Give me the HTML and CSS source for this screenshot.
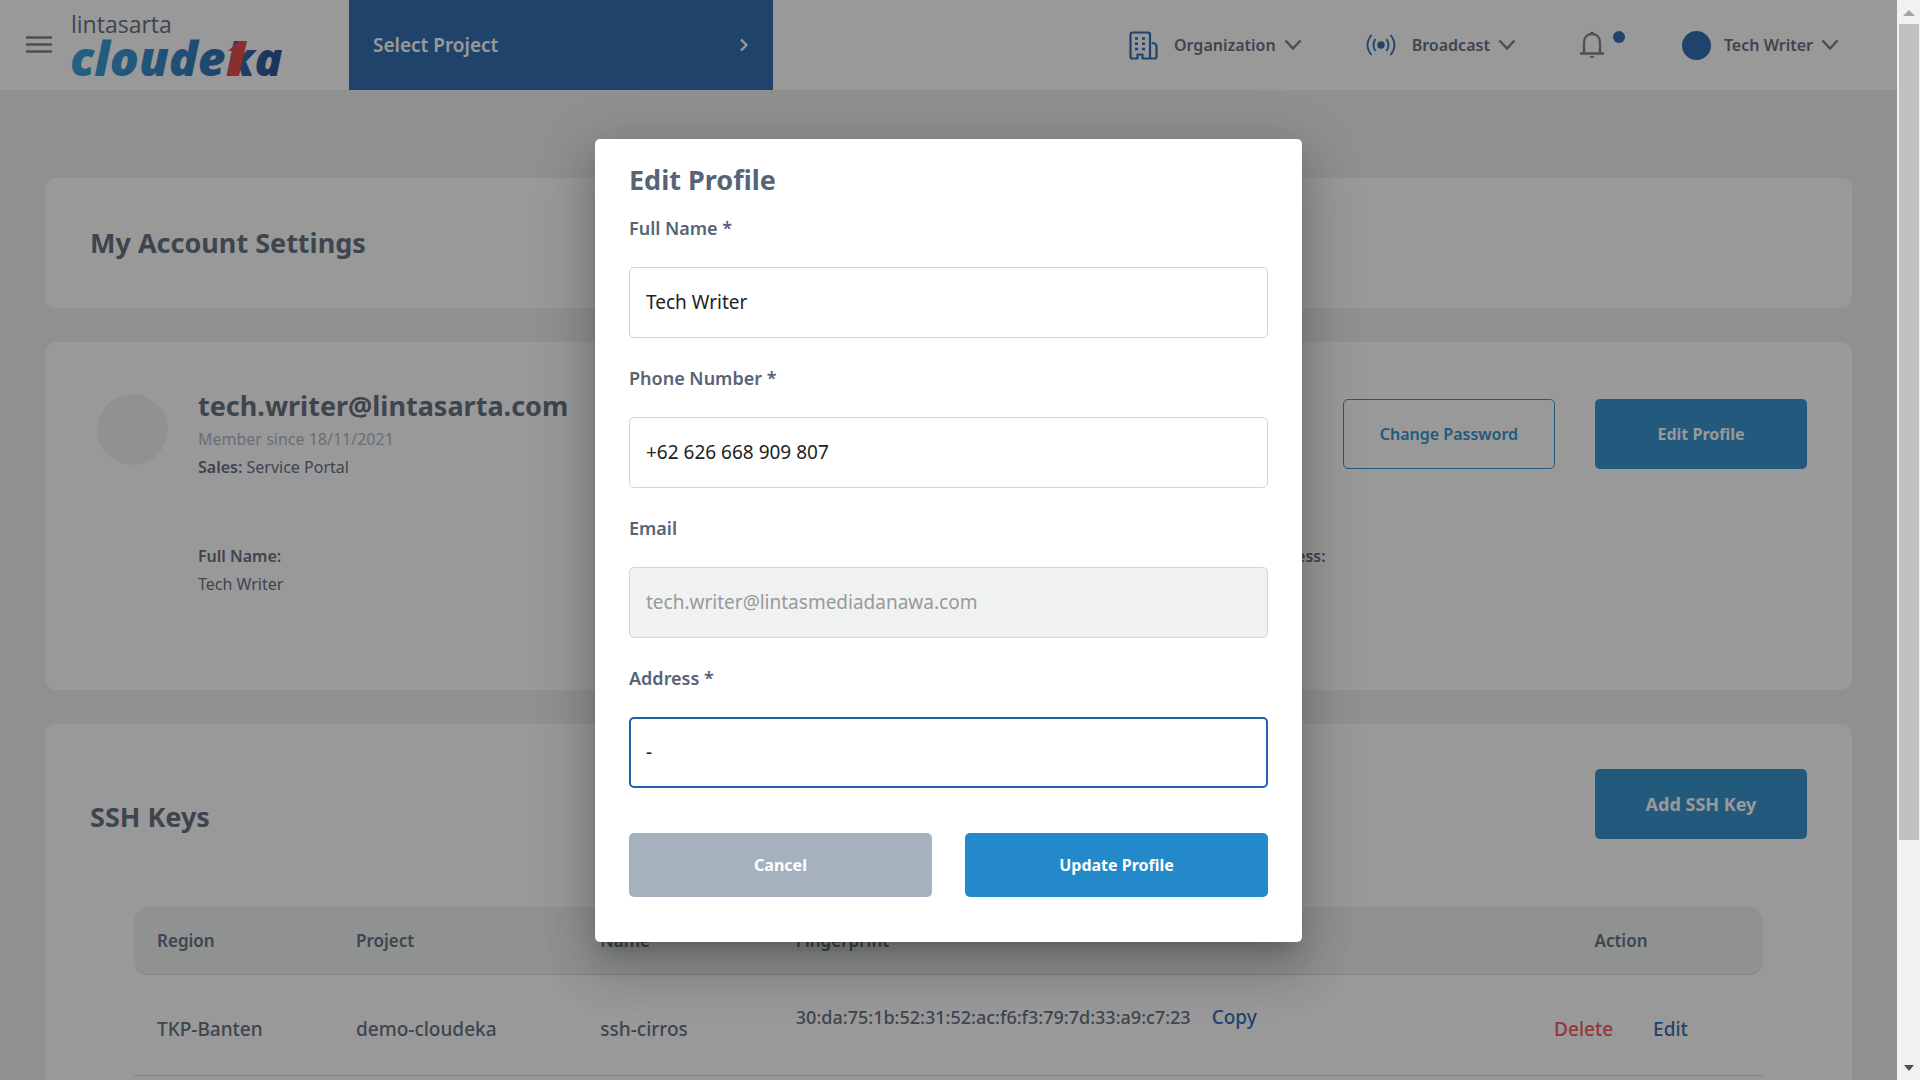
FILE: index.html
```html
<!DOCTYPE html>
<html lang="en">
<head>
  <meta charset="UTF-8">
  <title>My Account Settings</title>
  <link rel="stylesheet" href="styles.css">
</head>
<body>

  <div class="page">
    <header>
      <button class="menu-btn" aria-label="Menu">
        <svg width="26" height="18" viewBox="0 0 26 18"><path d="M0 1.5h26M0 8.5h26M0 15.5h26" stroke="#777" stroke-width="2.4"/></svg>
      </button>
      <a href="#" class="logo" aria-label="lintasarta cloudeka">
        <svg width="220" height="90" viewBox="0 0 220 90">
          <defs>
            <linearGradient id="brand" gradientUnits="userSpaceOnUse" x1="0" y1="0" x2="216" y2="0">
              <stop offset="0" stop-color="#2699d6"/>
              <stop offset="0.6" stop-color="#1f6fb5"/>
              <stop offset="1" stop-color="#1b3f8c"/>
            </linearGradient>
          </defs>
          <text x="2" y="33" class="logo-top">lintasarta</text>
          <text x="1" y="76" class="logo-main" fill="url(#brand)">cloude<tspan x="157" class="logo-end">ka</tspan></text>
          <path d="M178 41h-8l-11 10h5l-6 25h12z" fill="#e8383a"/>
        </svg>
      </a>

      <button class="project-btn">
        Select Project
        <svg width="10" height="14" viewBox="0 0 10 14"><path d="M2 1.500l5.500 5.500l-5.500 5.500" fill="none" stroke="#fff" stroke-width="2.300"/></svg>
      </button>

      <nav>
        <button class="nav-item">
          <svg class="nav-icon" width="29" height="29" viewBox="0 0 29 29" fill="none" stroke="#1f61a8" stroke-width="2.200">
            <path d="M21 27.500V3.500a2 2 0 0 0-2-2H3.500a2 2 0 0 0-2 2v22a2 2 0 0 0 2 2H8.500v-4h5v4H25.500a2 2 0 0 0 2-2V15.500q0-3-4-3.500" stroke-linejoin="round" stroke-linecap="round"/>
            <path d="M6 7.500h3M13 7.500h3M6 12.700h3M13 12.700h3M6 18h3M13 18h3" stroke-width="2.600"/>
          </svg>
          Organization
          <svg width="18" height="12" viewBox="0 0 18 12"><path d="M1.500 1.500l7.500 8l7.500-8" class="chevron"/></svg>
        </button>
        <button class="nav-item">
          <svg class="nav-icon" width="30" height="22" viewBox="0 0 30 22" fill="none" stroke="#1f61a8" stroke-width="1.800">
            <circle cx="15" cy="11" r="3.700" fill="#1f61a8" stroke="none"/>
            <path d="M9.500 5q-4 6 0 12M20.500 5q4 6 0 12M5.500 1q-8 10 0 20M24.500 1q8 10 0 20"/>
          </svg>
          Broadcast
          <svg width="18" height="12" viewBox="0 0 18 12"><path d="M1.500 1.500l7.500 8l7.500-8" class="chevron"/></svg>
        </button>
        <button class="nav-item bell" aria-label="Notifications">
          <svg width="46" height="30" viewBox="0 0 46 30">
            <path d="M4 23.500V12.500C4 7 7.500 4 12 4s8 3 8 8.500v11M0 23.500h24" fill="none" stroke="#777" stroke-width="2.300"/>
            <path d="M10 3.500a2 2 0 0 1 4 0v1h-4zM9.500 26h5a2.500 2 0 0 1-5 0z" fill="#777"/>
            <circle cx="39" cy="7" r="6" fill="#1f61a8"/>
          </svg>
        </button>
        <button class="nav-item">
          <span class="user-dot"></span>
          Tech Writer
          <svg width="18" height="12" viewBox="0 0 18 12"><path d="M1.500 1.500l7.500 8l7.500-8" class="chevron"/></svg>
        </button>
      </nav>
    </header>

    <main>
      <section class="card">
        <h1>My Account Settings</h1>
      </section>

      <section class="card account">
        <div class="avatar"></div>
        <div class="account-body">
          <div class="account-top">
            <div>
              <h2>tech.writer@lintasarta.com</h2>
              <p class="member">Member since 18/11/2021</p>
              <p><b>Sales:</b> Service Portal</p>
            </div>
            <div class="account-buttons">
              <button class="btn btn-outline">Change Password</button>
              <button class="btn btn-blue">Edit Profile</button>
            </div>
          </div>
          <div class="account-info">
            <p><b>Full Name:</b><br>Tech Writer</p>
            <p class="address"><b>Address:</b></p>
          </div>
        </div>
      </section>

      <section class="card ssh">
        <div class="ssh-top">
          <h2>SSH Keys</h2>
          <button class="btn btn-blue btn-large">Add SSH Key</button>
        </div>
        <table>
          <thead>
            <tr>
              <th class="col-region">Region</th>
              <th class="col-project">Project</th>
              <th class="col-name">Name</th>
              <th>Fingerprint</th>
              <th class="col-action">Action</th>
            </tr>
          </thead>
          <tbody>
            <tr>
              <td>TKP-Banten</td>
              <td>demo-cloudeka</td>
              <td>ssh-cirros</td>
              <td class="fingerprint"><span>30:da:75:1b:52:31:52:ac:f6:f3:79:7d:33:a9:c7:23</span> <a href="#">Copy</a></td>
              <td class="col-action"><a href="#" class="delete">Delete</a><a href="#">Edit</a></td>
            </tr>
          </tbody>
        </table>
      </section>
    </main>

    <!-- Edit profile dialog -->
    <div class="overlay">
      <form class="modal" role="dialog" aria-labelledby="modalTitle">
        <h2 id="modalTitle">Edit Profile</h2>
        <div class="field">
          <label for="fullName">Full Name *</label>
          <input type="text" id="fullName" value="Tech Writer">
        </div>
        <div class="field">
          <label for="phone">Phone Number *</label>
          <input type="text" id="phone" value="+62 626 668 909 807">
        </div>
        <div class="field">
          <label for="email">Email</label>
          <input type="text" id="email" value="tech.writer@lintasmediadanawa.com" disabled>
        </div>
        <div class="field">
          <label for="address">Address *</label>
          <input type="text" id="address" class="focused" value="-">
        </div>
        <div class="modal-buttons">
          <button type="button" class="btn btn-grey">Cancel</button>
          <button type="button" class="btn btn-blue">Update Profile</button>
        </div>
      </form>
    </div>
  </div>

  <div class="scrollbar">
    <svg width="12" height="24" viewBox="0 0 12 24"><path d="M0 16l6-6l6 6z" fill="#a3a3a3"/></svg>
    <div class="thumb"></div>
    <svg width="12" height="24" viewBox="0 0 12 24"><path d="M1 9l5 6l5-6z" fill="#505050"/></svg>
  </div>

</body>
</html>
```
FILE: styles.css
```css
* {
  box-sizing: border-box;
}

body {
  margin: 0;
  height: 100vh;
  display: flex;
  overflow: hidden;
  font-family: "Noto Sans", "Open Sans", sans-serif;
  font-size: 16px;
  line-height: 28px;
  color: #566476;
  background-color: #eee;
}

h1, h2, p {
  margin: 0;
}

h1, h2 {
  font-size: 27px;
  line-height: 38px;
  font-weight: 700;
}

b {
  font-weight: 600;
}

a {
  color: #1f61a8;
  text-decoration: none;
}

button {
  font-family: inherit;
  border: none;
  background: none;
  padding: 0;
  cursor: pointer;
}

.page {
  flex: 1;
  min-width: 0;
  position: relative;
  overflow: hidden;
}

/* Header */
header {
  display: flex;
  align-items: center;
  height: 90px;
  padding: 0 50px 0 26px;
  background-color: white;
}

.menu-btn,
.menu-btn svg,
.logo svg,
.project-btn svg {
  display: block;
}

.logo {
  margin: 0 60px 0 17px;
}

.logo-top {
  font-family: "Open Sans", sans-serif;
  font-size: 23px;
  fill: #566476;
}

.logo-main {
  font-family: "Open Sans", sans-serif;
  font-size: 48px;
  font-weight: 800;
  font-style: italic;
}

.logo-end {
  font-size: 46px;
}

.project-btn {
  display: flex;
  align-items: center;
  justify-content: space-between;
  align-self: stretch;
  width: 424px;
  padding: 0 24px;
  background-color: #1f61a8;
  color: white;
  font-size: 19px;
  font-weight: 600;
}

nav {
  display: flex;
  align-items: center;
  gap: 56px;
  margin-left: auto;
}

.nav-item {
  display: flex;
  align-items: center;
  gap: 8px;
  padding-right: 8px;
  color: #566476;
  font-size: 16px;
  font-weight: 600;
}

.nav-icon {
  margin-right: 8px;
}

.chevron {
  fill: none;
  stroke: #777;
  stroke-width: 2.5;
}

.user-dot {
  width: 29px;
  height: 29px;
  margin-right: 5px;
  border-radius: 50%;
  background-color: #1f61a8;
}

.bell {
  padding-right: 0;
}

/* Cards */
main {
  display: flex;
  flex-direction: column;
  gap: 34px;
  padding: 88px 45px;
}

.card {
  padding: 46px 45px;
  background-color: white;
  border-radius: 11px;
}

.account {
  display: flex;
  gap: 30px;
  padding: 45px 45px 92px 52px;
}

.avatar {
  width: 71px;
  height: 71px;
  margin-top: 7px;
  border-radius: 50%;
  background-color: #eef1f0;
}

.account-body {
  flex: 1;
}

.account-top {
  display: flex;
  justify-content: space-between;
}

.member {
  color: #a5b2be;
}

.account-buttons {
  display: flex;
  gap: 40px;
  padding-top: 12px;
}

.account-info {
  display: grid;
  grid-template-columns: repeat(3, 1fr);
  margin: 61px 18px 0 0;
}

.address {
  grid-column: 3;
}

.btn {
  width: 212px;
  height: 70px;
  border-radius: 5px;
  font-size: 16px;
  font-weight: 700;
}

.btn-blue {
  background-color: #2389cb;
  color: white;
}

.btn-grey {
  background-color: #a5b2be;
  color: white;
}

.btn-outline {
  border: 1px solid #2389cb;
  color: #2389cb;
  font-weight: 600;
}

.btn-large {
  font-size: 18px;
}

/* SSH keys */
.ssh {
  padding: 45px 45px 80px;
}

.ssh-top {
  display: flex;
  justify-content: space-between;
  align-items: flex-end;
}

.ssh-top h2 {
  line-height: 44px;
}

table {
  width: calc(100% - 88px);
  margin: 68px 44px 0;
  table-layout: fixed;
  border-collapse: separate;
  border-spacing: 0;
}

th, td {
  padding: 0 0 0 23px;
  text-align: left;
  border-bottom: 1px solid #d4d4d4;
}

th {
  height: 68px;
  font-size: 17px;
  font-weight: 600;
  background-color: #eef1f0;
}

th:first-child {
  border-radius: 14px 0 0 14px;
}

th:last-child {
  border-radius: 0 14px 14px 0;
}

td {
  height: 101px;
  padding-top: 8px;
  font-size: 19px;
  font-weight: 500;
  white-space: nowrap;
}

.col-region {
  width: 199px;
}

.col-project {
  width: 15%;
}

.col-name {
  width: 12%;
}

.col-action {
  width: 284px;
  padding-left: 0;
  text-align: center;
}

.fingerprint {
  padding-bottom: 24px;
}

.fingerprint span {
  font-size: 18px;
}

.fingerprint a {
  margin-left: 16px;
}

.delete {
  margin-right: 40px;
  color: #f04a50;
}

/* Dialog */
.overlay {
  position: absolute;
  inset: 0;
  display: flex;
  align-items: center;
  justify-content: center;
  background-color: rgba(33, 33, 33, 0.46);
}

.modal {
  width: 707px;
  padding: 22px 34px 45px;
  border-radius: 5px;
  background-color: white;
  box-shadow: 0 13px 18px -9px rgba(0, 0, 0, 0.2),
    0 29px 47px 4px rgba(0, 0, 0, 0.14),
    0 11px 56px 10px rgba(0, 0, 0, 0.12);
}

.modal h2 {
  margin-bottom: 17px;
}

.field {
  margin-bottom: 28px;
}

.field label {
  display: block;
  margin-bottom: 27px;
  font-size: 18px;
  line-height: 24px;
  font-weight: 600;
}

.field input {
  display: block;
  width: 100%;
  height: 71px;
  padding: 0 16px;
  border: 1px solid #c8d6e5;
  border-radius: 5px;
  font-family: inherit;
  font-size: 19px;
  color: #222;
  background-color: white;
}

.field input:disabled {
  color: #999;
  background-color: #f0f2f1;
}

.field input.focused {
  padding: 0 15px;
  border: 2px solid #1f61a8;
}

.modal-buttons {
  display: flex;
  gap: 33px;
  margin-top: 45px;
}

.modal-buttons .btn {
  flex: 1;
  height: 64px;
}

/* Window scrollbar */
.scrollbar {
  display: flex;
  flex-direction: column;
  align-items: center;
  width: 23px;
  background-color: #f1f1f1;
}

.thumb {
  width: 20px;
  height: 816px;
  margin-bottom: auto;
  background-color: #c1c1c1;
}
```
